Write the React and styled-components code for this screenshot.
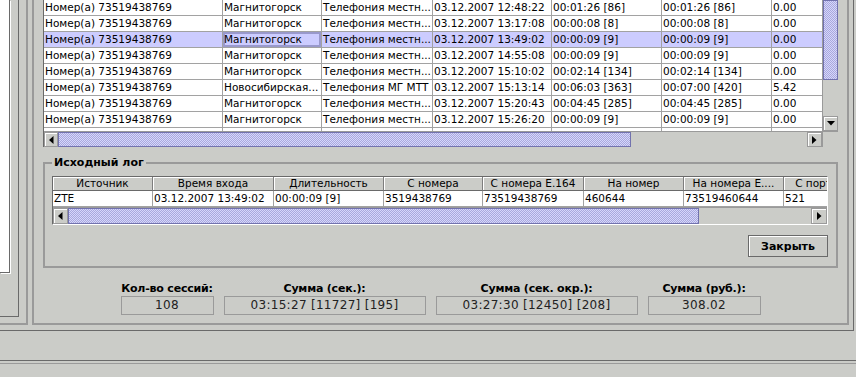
import styled, { createGlobalStyle } from 'styled-components'

const colors = {
  panel: '#cbccc8',
  dark: '#6a6a6a',
  etch: '#9a9a9a',
  grid: '#a2a2a2',
  select: '#ccccff',
  focus: '#9999cc',
  thumbA: '#a9a9dd',
  thumbB: '#d6d6fb',
  thumbEdge: '#7272ae',
}

const GlobalStyle = createGlobalStyle`
  html, body {
    margin: 0;
    padding: 0;
    background: ${colors.panel};
  }
  body {
    font-family: "DejaVu Sans", "Liberation Sans", sans-serif;
    color: #000;
  }
  *, *::before, *::after {
    box-sizing: border-box;
  }
`

const Frame = styled.div`
  width: 856px;
  height: 377px;
  overflow: hidden;
  background: ${colors.panel};
`

const Workspace = styled.div`
  display: flex;
  align-items: flex-start;
  width: 854px;
  height: 331px;
  border-right: 1px solid ${colors.dark};
  border-bottom: 1px solid ${colors.dark};
`

const LeftPanel = styled.div`
  flex: none;
  width: 28px;
  height: 325px;
  border-right: 2px solid ${colors.etch};
  border-bottom: 2px solid ${colors.etch};
`

const LeftInset = styled.div`
  width: 19px;
  height: 317px;
  border-right: 1px solid ${colors.dark};
  border-bottom: 1px solid ${colors.dark};
`

const ListBox = styled.div`
  width: 10px;
  height: 273px;
  background: #fff;
  border-right: 1px solid ${colors.dark};
  border-bottom: 1px solid ${colors.dark};
  box-shadow: 1px 1px 0 #fff;
`

const MainPanel = styled.div`
  flex: 1;
  min-width: 0;
  margin: 0 4px;
  border: 2px solid ${colors.etch};
  border-top: none;
  padding: 0 9px 8px;
`

const TablePane = styled.div`
  display: grid;
  grid-template-columns: minmax(0, 1fr) 16px;
  grid-template-rows: 131px 16px;
  border-left: 1px solid ${colors.dark};
`

const Viewport = styled.div`
  overflow: hidden;
  background: #fff;
`

const Row = styled.div`
  display: grid;
  grid-template-columns: ${p => p.$columns};
  height: ${p => p.$height}px;
  background: ${p => (p.$selected ? colors.select : '#fff')};
`

const Cell = styled.div`
  border-right: 1px solid ${colors.grid};
  border-bottom: 1px solid ${colors.grid};
  padding-left: 1px;
  font-size: 10.5px;
  line-height: 15px;
  white-space: nowrap;
  overflow: hidden;
  ${p => p.$focus && `box-shadow: inset 0 0 0 1px ${colors.focus}, inset 0 0 0 2px ${colors.focus};`}
`

const HeaderCell = styled.div`
  border-right: 1px solid #7e7e7e;
  border-bottom: 1px solid ${colors.dark};
  box-shadow: inset 1px 1px 0 #fff;
  background: ${colors.panel};
  font-size: 10.5px;
  line-height: 13px;
  text-align: center;
  white-space: nowrap;
  overflow: hidden;
`

const ScrollBar = styled.div`
  display: flex;
  flex-direction: ${p => (p.$vertical ? 'column' : 'row')};
  min-width: 0;
  background: ${colors.panel};
  ${p => (p.$vertical ? `border-left: 1px solid ${colors.etch};` : `border-top: 1px solid ${colors.etch};`)}
`

const Thumb = styled.div`
  flex: 0 0 ${p => p.$size}px;
  border: 1px solid ${colors.thumbEdge};
  background: repeating-conic-gradient(${colors.thumbA} 0 25%, ${colors.thumbB} 0 50%) 0 0 / 2px 2px;
`

const Track = styled.div`
  flex: 1;
  min-width: 0;
  background: ${colors.panel};
`

const ArrowButton = styled.div`
  flex: 0 0 ${p => p.$size}px;
  display: flex;
  align-items: center;
  justify-content: center;
  background: ${colors.panel};
  border: 1px solid ${colors.etch};
  box-shadow: inset 1px 1px 0 #fff;
`

const Corner = styled.div`
  background: ${colors.panel};
  border-left: 1px solid ${colors.etch};
  border-top: 1px solid ${colors.etch};
`

const GroupBox = styled.fieldset`
  margin: 9px 0 0;
  min-width: 0;
  padding: 6px 8px 9px 7px;
  border: 2px solid ${colors.etch};
`

const GroupTitle = styled.legend`
  padding: 0 2px;
  font-size: 11px;
  font-weight: bold;
  line-height: 14px;
`

const GroupBody = styled.div`
  display: flex;
  flex-direction: column;
  min-width: 0;
`

const InnerPane = styled.div`
  overflow: hidden;
  border-top: 1px solid ${colors.dark};
  border-left: 1px solid ${colors.dark};
  border-bottom: 1px solid #fff;
  border-right: 1px solid #fff;
  background: #fff;
`

const HScroll = styled(ScrollBar)`
  height: ${p => p.$height}px;
`

const Button = styled.button`
  align-self: flex-end;
  margin-top: 10px;
  width: 80px;
  height: 22px;
  padding: 0;
  background: ${colors.panel};
  border: 1px solid ${colors.dark};
  box-shadow: inset 1px 1px 0 #fff;
  font-family: "DejaVu Sans", sans-serif;
  font-size: 11px;
  font-weight: bold;
  color: #000;
`

const SummaryRow = styled.div`
  display: flex;
  justify-content: center;
  gap: 10px;
  margin-top: 14px;
`

const SummaryField = styled.div`
  display: flex;
  flex-direction: column;
  align-items: center;
  width: ${p => p.$width}px;
`

const SummaryLabel = styled.div`
  font-size: 11px;
  font-weight: bold;
  line-height: 14px;
  white-space: nowrap;
  letter-spacing: -0.2px;
`

const SummaryValue = styled.div`
  width: 100%;
  height: 19px;
  border: 1px solid ${colors.etch};
  font-size: 12px;
  line-height: 17px;
  letter-spacing: 0.3px;
  text-align: center;
  color: #222;
`

const StatusGap = styled.div`
  height: 29px;
`

const StatusStrip = styled.div`
  height: 17px;
  border-top: 1px solid ${colors.dark};
  box-shadow: inset 0 2px 0 ${colors.panel}, inset 0 3px 0 ${colors.etch};
`

const Arrow = ({ dir }) => {
  if (dir === 'down') {
    return (
      <svg width="8" height="5" viewBox="0 0 8 5">
        <polygon points="0,0 8,0 4,4.5" fill="#000" />
      </svg>
    )
  }
  const points = dir === 'left' ? '4.5,0 4.5,8 0,4' : '0,0 0,8 4.5,4'
  return (
    <svg width="5" height="8" viewBox="0 0 5 8">
      <polygon points={points} fill="#000" />
    </svg>
  )
}

const mainColumns = '179px 99px 111px 119px 110px 110px 60px'

const sessions = [
  ['Магнитогорск', 'Телефония местн...', '03.12.2007 12:48:22', '00:01:26 [86]', '00:01:26 [86]', '0.00'],
  ['Магнитогорск', 'Телефония местн...', '03.12.2007 13:17:08', '00:00:08 [8]', '00:00:08 [8]', '0.00'],
  ['Магнитогорск', 'Телефония местн...', '03.12.2007 13:49:02', '00:00:09 [9]', '00:00:09 [9]', '0.00'],
  ['Магнитогорск', 'Телефония местн...', '03.12.2007 14:55:08', '00:00:09 [9]', '00:00:09 [9]', '0.00'],
  ['Магнитогорск', 'Телефония местн...', '03.12.2007 15:10:02', '00:02:14 [134]', '00:02:14 [134]', '0.00'],
  ['Новосибирская...', 'Телефония МГ МТТ', '03.12.2007 15:13:14', '00:06:03 [363]', '00:07:00 [420]', '5.42'],
  ['Магнитогорск', 'Телефония местн...', '03.12.2007 15:20:43', '00:04:45 [285]', '00:04:45 [285]', '0.00'],
  ['Магнитогорск', 'Телефония местн...', '03.12.2007 15:26:20', '00:00:09 [9]', '00:00:09 [9]', '0.00'],
  ['Магнитогорск', 'Телефония местн...', '03.12.2007 15:37:06', '00:05:33 [333]', '00:05:33 [333]', '0.00'],
]

const logColumns = '100px 121px 110px 99px 101px 100px 100px 60px'
const logHeader = ['Источник', 'Время входа', 'Длительность', 'С номера', 'С номера E.164', 'На номер', 'На номера E....', 'С порт']
const logRow = ['ZTE', '03.12.2007 13:49:02', '00:00:09 [9]', '3519438769', '73519438769', '460644', '73519460644', '521']

const totals = [
  { label: 'Кол-во сессий:', value: '108', width: 93 },
  { label: 'Сумма (сек.):', value: '03:15:27 [11727] [195]', width: 202 },
  { label: 'Сумма (сек. окр.):', value: '03:27:30 [12450] [208]', width: 202 },
  { label: 'Сумма (руб.):', value: '308.02', width: 113 },
]

function SessionTable() {
  return (
    <TablePane>
      <Viewport>
        {sessions.map((row, i) => (
          <Row key={i} $columns={mainColumns} $height={16} $selected={i === 2}>
            <Cell>Номер(а) 73519438769</Cell>
            {row.map((value, j) => (
              <Cell key={j} $focus={i === 2 && j === 0}>{value}</Cell>
            ))}
          </Row>
        ))}
      </Viewport>
      <ScrollBar $vertical>
        <Thumb $size={80} />
        <Track />
        <ArrowButton $size={15}><Arrow dir="down" /></ArrowButton>
      </ScrollBar>
      <ScrollBar>
        <ArrowButton $size={14}><Arrow dir="left" /></ArrowButton>
        <Thumb $size={573} />
        <Track />
        <ArrowButton $size={15}><Arrow dir="right" /></ArrowButton>
      </ScrollBar>
      <Corner />
    </TablePane>
  )
}

function SourceLog() {
  return (
    <GroupBox>
      <GroupTitle>Исходный лог</GroupTitle>
      <GroupBody>
        <InnerPane>
          <Row $columns={logColumns} $height={14}>
            {logHeader.map(title => (
              <HeaderCell key={title}>{title}</HeaderCell>
            ))}
          </Row>
          <Row $columns={logColumns} $height={16}>
            {logRow.map((value, j) => (
              <Cell key={j}>{value}</Cell>
            ))}
          </Row>
          <HScroll $height={17}>
            <ArrowButton $size={15}><Arrow dir="left" /></ArrowButton>
            <Thumb $size={631} />
            <Track />
            <ArrowButton $size={16}><Arrow dir="right" /></ArrowButton>
          </HScroll>
        </InnerPane>
        <Button>Закрыть</Button>
      </GroupBody>
    </GroupBox>
  )
}

export default function App() {
  return (
    <Frame>
      <GlobalStyle />
      <Workspace>
        <LeftPanel>
          <LeftInset>
            <ListBox />
          </LeftInset>
        </LeftPanel>
        <MainPanel>
          <SessionTable />
          <SourceLog />
          <SummaryRow>
            {totals.map(t => (
              <SummaryField key={t.label} $width={t.width}>
                <SummaryLabel>{t.label}</SummaryLabel>
                <SummaryValue>{t.value}</SummaryValue>
              </SummaryField>
            ))}
          </SummaryRow>
        </MainPanel>
      </Workspace>
      <StatusGap />
      <StatusStrip />
    </Frame>
  )
}
